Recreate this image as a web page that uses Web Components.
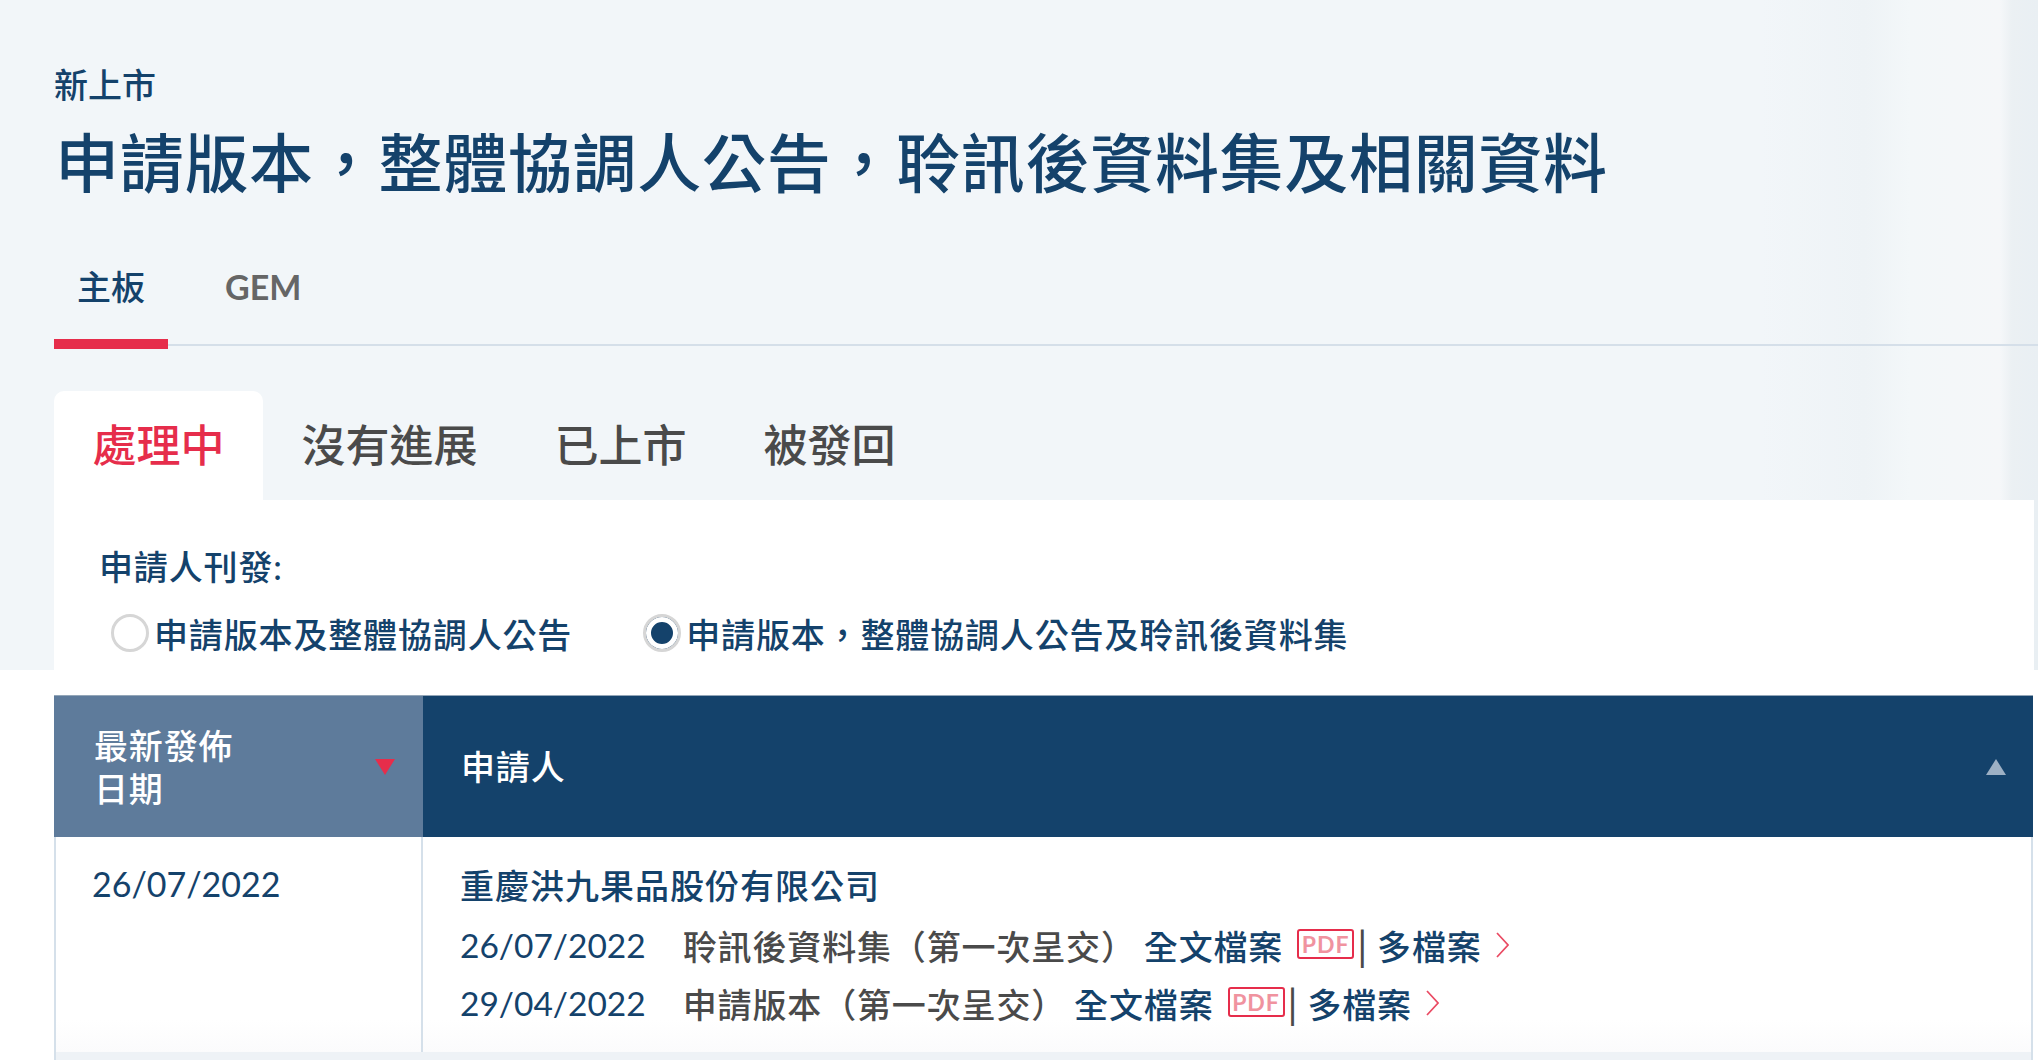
<!DOCTYPE html>
<html lang="zh-Hant">
<head>
<meta charset="utf-8">
<title>新上市</title>
<style>
    html, body {
        margin: 0;
        height: 100%;
        overflow: hidden;
        background: #fff;
        font-family: "Lato", "Noto Sans CJK TC", sans-serif;
    }
</style>
</head>
<body>
<listing-page>
    <page-heading eyebrow="新上市" title-text="申請版本，整體協調人公告，聆訊後資料集及相關資料"></page-heading>
    <board-tabs></board-tabs>
    <status-tabs></status-tabs>
    <listing-panel>
        <publish-filter></publish-filter>
        <listing-table>
            <listing-row date="26/07/2022" company="重慶洪九果品股份有限公司">
                <doc-line date="26/07/2022" text="聆訊後資料集（第一次呈交）"></doc-line>
                <doc-line date="29/04/2022" text="申請版本（第一次呈交）"></doc-line>
            </listing-row>
        </listing-table>
    </listing-panel>
</listing-page>
<script>
const NAVY = '#14426b';
const RED = '#e62d4b';
const GREY = '#4a4a4a';

function shadow(el, html) {
    el.attachShadow({mode: 'open'}).innerHTML = html;
}

customElements.define('listing-page', class extends HTMLElement {
    connectedCallback() {
        shadow(this, `
<style>
    :host {
        display: block;
        height: 1060px;
        overflow: hidden;
        background-color: #fff;
        background-image: linear-gradient(90deg, #f2f6f9 0, #f2f6f9 1700px, #f2f6f9 1760px, #eef3f6 1865px, #f3f7f9 1910px, #f5f7f9 2000px, #ebf0f3 2012px, #e9eff3 2038px);
        background-size: 100% 670px;
        background-repeat: no-repeat;
    }
</style>
<slot></slot>`);
    }
});

customElements.define('page-heading', class extends HTMLElement {
    connectedCallback() {
        shadow(this, `
<style>
    :host {
        display: block;
        padding: 65px 0 0 54px;
        color: ${NAVY};
    }
    #eyebrow {
        font-size: 34px;
        line-height: 40px;
        font-weight: 500;
    }
    h1 {
        margin: 18px 0 0 1px;
        font-size: 64px;
        line-height: 80px;
        font-weight: 500;
        letter-spacing: .7px;
        white-space: nowrap;
    }
</style>
<div id="eyebrow">${this.getAttribute('eyebrow')}</div>
<h1>${this.getAttribute('title-text')}</h1>`);
    }
});

customElements.define('board-tabs', class extends HTMLElement {
    connectedCallback() {
        shadow(this, `
<style>
    :host {
        display: flex;
        margin: 64px 0 0 54px;
        border-bottom: 2px solid #d5dfe9;
        font-size: 34px;
        line-height: 40px;
    }
    div {
        position: relative;
        padding: 0 23px 37px;
        color: #666;
        font-weight: 700;
    }
    #main {
        color: ${NAVY};
        font-weight: 500;
    }
    #main::after {
        content: '';
        position: absolute;
        left: 0;
        right: 0;
        bottom: -5px;
        height: 10px;
        background: ${RED};
    }
    #gem {
        margin-left: 34px;
    }
</style>
<div id="main">主板</div>
<div id="gem">GEM</div>`);
    }
});

customElements.define('status-tabs', class extends HTMLElement {
    connectedCallback() {
        const tabs = ['處理中', '沒有進展', '已上市', '被發回'];
        shadow(this, `
<style>
    :host {
        display: flex;
        margin: 45px 0 0 54px;
        font-size: 44px;
        line-height: 109px;
        font-weight: 500;
        color: ${GREY};
    }
    div {
        padding: 0 38.5px;
    }
    .on {
        background: #fff;
        border-radius: 10px 10px 0 0;
        color: ${RED};
    }
</style>
${tabs.map((t, i) => `<div class="${i ? '' : 'on'}">${t}</div>`).join('')}`);
    }
});

customElements.define('listing-panel', class extends HTMLElement {
    connectedCallback() {
        shadow(this, `
<style>
    :host {
        display: block;
        margin: 0 4px 0 54px;
        background: #fff;
    }
</style>
<slot></slot>`);
    }
});

customElements.define('publish-filter', class extends HTMLElement {
    connectedCallback() {
        shadow(this, `
<style>
    :host {
        display: block;
        padding: 45px 0 43px 45px;
        color: ${NAVY};
        font-size: 34px;
        font-weight: 500;
        letter-spacing: .85px;
    }
    #label {
        line-height: 44px;
    }
    #options {
        display: flex;
        gap: 71px;
        margin: 25px 0 0 12px;
    }
    label {
        display: flex;
        align-items: center;
        gap: 5px;
        height: 38px;
    }
    i {
        box-sizing: border-box;
        width: 38px;
        height: 38px;
        border: 3px solid #d6d6d6;
        border-radius: 50%;
        background: #fff;
    }
    i.on {
        background: ${NAVY};
        box-shadow: inset 0 0 0 5px #fff;
    }
</style>
<div id="label">申請人刊發:</div>
<div id="options">
    <label><i></i>申請版本及整體協調人公告</label>
    <label><i class="on"></i>申請版本，整體協調人公告及聆訊後資料集</label>
</div>`);
    }
});

customElements.define('listing-table', class extends HTMLElement {
    connectedCallback() {
        shadow(this, `
<style>
    :host {
        display: block;
        margin-right: 1px;
        font-size: 34px;
        letter-spacing: .85px;
    }
    #head {
        display: grid;
        grid-template-columns: 369px 1fr;
        height: 141px;
        border-top: 1px solid #93a6b8;
        color: #fff;
        font-weight: 500;
    }
    #head > div {
        display: flex;
        align-items: center;
        justify-content: space-between;
        line-height: 43px;
    }
    #date {
        padding: 0 28px 0 40px;
        background: #5e7b9b;
    }
    #name {
        padding: 0 27px 0 38px;
        background: ${NAVY};
    }
    svg {
        display: block;
    }
    #next {
        height: 8px;
        background: #eef2f6;
        border-left: 2px solid #d5e0ea;
        border-right: 2px solid #d5e0ea;
    }
</style>
<div id="head">
    <div id="date"><span>最新發佈<br>日期</span>
        <svg width="20" height="16"><polygon points="0,0 20,0 10,16" fill="${RED}"/></svg></div>
    <div id="name"><span>申請人</span>
        <svg width="20" height="16"><polygon points="0,16 20,16 10,0" fill="#9db0c4"/></svg></div>
</div>
<slot></slot>
<div id="next"></div>`);
    }
});

customElements.define('listing-row', class extends HTMLElement {
    connectedCallback() {
        shadow(this, `
<style>
    :host {
        display: grid;
        grid-template-columns: 367px 1fr;
        height: 215px;
        border-left: 2px solid #d5e0ea;
        border-right: 2px solid #d5e0ea;
        color: ${NAVY};
        background: linear-gradient(#fff 85%, #fbfbfc);
    }
    #date {
        padding: 25px 0 0 36px;
        line-height: 44px;
        letter-spacing: 0;
        border-right: 2px solid #d5e0ea;
    }
    #main {
        padding: 27px 0 0 37px;
    }
    #company {
        line-height: 44px;
        font-weight: 500;
        letter-spacing: 1px;
        margin-bottom: 15px;
    }
</style>
<div id="date">${this.getAttribute('date')}</div>
<div id="main">
    <div id="company">${this.getAttribute('company')}</div>
    <slot></slot>
</div>`);
    }
});

customElements.define('doc-line', class extends HTMLElement {
    connectedCallback() {
        shadow(this, `
<style>
    :host {
        display: flex;
        align-items: center;
        height: 44px;
        margin-bottom: 14px;
        white-space: nowrap;
        font-weight: 500;
    }
    #day {
        font-size: 33.5px;
        font-weight: 400;
        letter-spacing: 0;
    }
    #text {
        margin: 0 8px 0 37px;
        color: ${GREY};
    }
    #pdf {
        box-sizing: border-box;
        width: 57px;
        height: 30px;
        margin: -2px 3px 0 14px;
        border: 2px solid ${RED};
        border-radius: 3px;
        color: #f0939f;
        font-size: 23px;
        font-weight: 700;
        line-height: 26px;
        letter-spacing: 1px;
        text-align: center;
    }
    #sep {
        color: ${GREY};
        font-size: 40px;
        font-weight: 400;
        margin: 2px 9px 0 0;
    }
    svg {
        margin-left: 14px;
    }
</style>
<span id="day">${this.getAttribute('date')}</span>
<span id="text">${this.getAttribute('text')}</span>
<span>全文檔案</span>
<span id="pdf">PDF</span>
<span id="sep">|</span>
<span>多檔案</span>
<svg width="13" height="26" viewBox="0 0 13 26" fill="none" stroke="#ea4a63" stroke-width="1.7"><path d="M1 1 L12 13 L1 25"/></svg>`);
    }
});
</script>
</body>
</html>
